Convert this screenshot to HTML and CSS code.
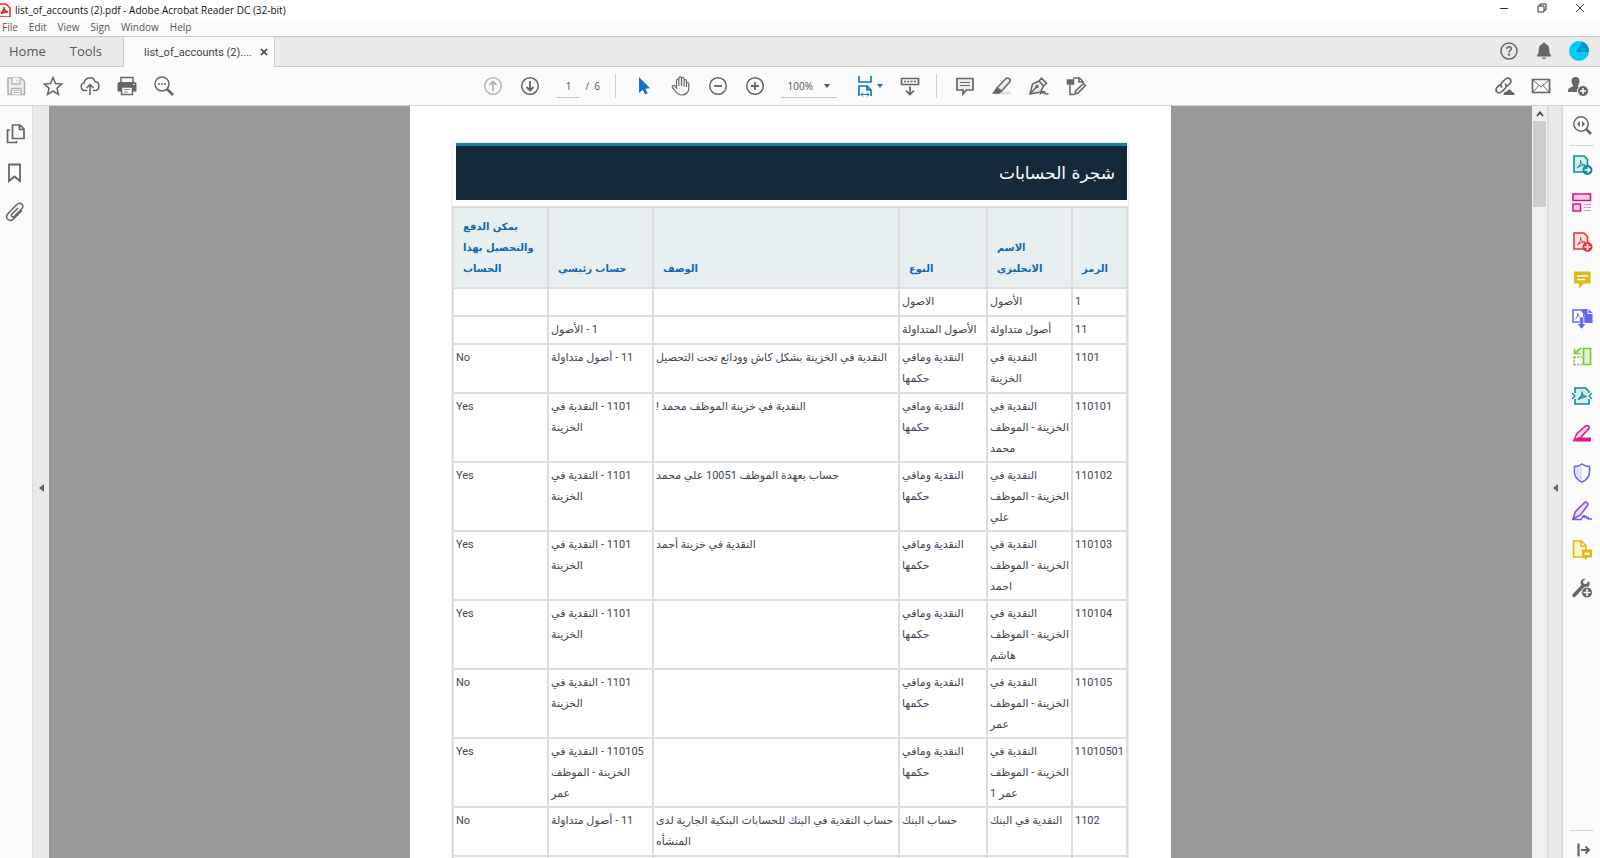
FILE: index.html
```html
<!DOCTYPE html>
<html lang="en">
<head>
<meta charset="utf-8">
<title>list_of_accounts (2).pdf - Adobe Acrobat Reader DC (32-bit)</title>
<link rel="stylesheet" href="styles.css">
</head>
<body>
<header class="titlebar">
  <svg class="app-icon" viewBox="0 0 12 14"><path d="M-3 1h9l4 4v9H-3z" fill="#fff" stroke="#e5252a" stroke-width="1.5"/><path d="M1 10.500C3 9 4 6 4 4c0 3 2 4.500 4 5-3-.5-5 .5-7 1.500z" fill="none" stroke="#e5252a" stroke-width="1.600"/></svg>
  <span class="title-text">list_of_accounts (2).pdf - Adobe Acrobat Reader DC (32-bit)</span>
  <div class="window-controls">
    <button aria-label="Minimize"><svg viewBox="0 0 10 10"><path d="M1 5.500h8"/></svg></button>
    <button aria-label="Restore"><svg viewBox="0 0 10 10"><path d="M1 3h6v6H1zM3 3V1h6v6H7"/></svg></button>
    <button aria-label="Close"><svg viewBox="0 0 10 10"><path d="M1 1l8 8M9 1L1 9"/></svg></button>
  </div>
</header>
<nav class="menubar">
  <button>File</button><button>Edit</button><button>View</button><button>Sign</button><button>Window</button><button>Help</button>
</nav>
<nav class="tabbar">
  <button class="tab home">Home</button>
  <button class="tab tools">Tools</button>
  <div class="tab current"><span>list_of_accounts (2)....</span><button class="tab-close" aria-label="Close tab"><svg viewBox="0 0 8 8"><path d="M1 1l6 6M7 1L1 7" stroke="#444" stroke-width="1.700"/></svg></button></div>
  <div class="account">
    <button aria-label="Help"><svg class="icon" viewBox="0 0 22 22"><circle cx="11" cy="11" r="8" fill="none" stroke="#666" stroke-width="1.500"/><path d="M8.800 9c0-3 4.600-2.800 4.400 0-.1 1.400-2.200 1.700-2.200 3.500" fill="none" stroke="#666" stroke-width="1.600"/><circle cx="11" cy="14.700" r="1.100" fill="#666"/></svg></button>
    <button aria-label="Notifications"><svg class="icon" viewBox="0 0 22 22"><path d="M11 2.500c.9 0 1.500.6 1.500 1.500 3 .8 3.700 3 3.800 6.500.1 2.500.7 3.600 1.700 4.800v1.200H4v-1.200c1-1.200 1.600-2.300 1.700-4.800C5.800 7 6.500 4.800 9.500 4c0-.9.6-1.500 1.500-1.500zM9 17.500h4c-.3 2-3.700 2-4 0z" fill="#666"/></svg></button>
    <button aria-label="Account"><svg class="icon" viewBox="0 0 22 22"><circle cx="11" cy="11" r="10" fill="#00ccfb"/><path d="M8 12L14 1.400a10 10 0 0 1 7 10.600z" fill="#0099cb"/></svg></button>
  </div>
</nav>
<div class="toolbar">
  <div class="group left">
    <button aria-label="Save"><svg class="icon" viewBox="0 0 22 22"><path d="M3 3h13l3.500 3.500v13H3z" fill="#eee" stroke="#b0b0b0" stroke-width="1.500"/><path d="M7 3v6h8V3M6.500 19.500v-6H16v6" fill="#fafafa" stroke="#b0b0b0" stroke-width="1.300"/><path d="M12 4.500v2.500M8.500 15.500h6M8.500 17.500h6" stroke="#bbb"/></svg></button>
    <button aria-label="Star"><svg class="icon line" viewBox="0 0 22 22"><path d="M11 2.500l2.500 6 6.200.500-4.700 4.200 1.500 6.300-5.500-3.400-5.500 3.400L7 13.200 2.300 9l6.200-.5z"/></svg></button>
    <button aria-label="Upload to cloud"><svg class="icon line" viewBox="0 0 22 22"><path d="M8 15.500H5.800a3.900 3.900 0 0 1-.5-7.700c.5-5.900 9-6.800 10.700-1.200 5 .2 5.300 8.400.2 8.900H14M11 20V10M7.500 13L11 9.500l3.500 3.500"/></svg></button>
    <button aria-label="Print"><svg class="icon" viewBox="0 0 22 22"><path d="M5 7V2.500h12V7" fill="#fafafa" stroke="#666" stroke-width="1.500"/><path d="M3 7h16l1.500 1.500v8H17v-3H5v3H1.500v-8z" fill="#666"/><path d="M5.500 12h11v7.500h-11z" fill="#fff" stroke="#666" stroke-width="1.500"/><path d="M8 14.500h6M8 17h4" stroke="#888"/><path d="M17 9.500h1.500" stroke="#fff"/></svg></button>
    <button aria-label="Find"><svg class="icon line" viewBox="0 0 22 22"><circle cx="9" cy="9" r="7"/><path d="M14 14l6 6" stroke-width="2.500"/><path d="M5 9h2M8 9h2M11 9h2"/></svg></button>
  </div>
  <div class="group middle">
    <button aria-label="Previous page"><svg class="icon line pale" viewBox="0 0 22 22"><circle cx="11" cy="11" r="8.300"/><path d="M11 16V6.500M7.500 10L11 6.500l3.500 3.500" stroke-width="1.800"/></svg></button>
    <button aria-label="Next page"><svg class="icon line" viewBox="0 0 22 22"><circle cx="11" cy="11" r="8.300"/><path d="M11 6v9.500M7.500 12l3.500 3.500 3.500-3.500" stroke-width="1.800"/></svg></button>
    <label class="page-nav"><input value="1" aria-label="Page number"><span>/&nbsp; 6</span></label>
    <span class="divider"></span>
    <button aria-label="Select"><svg class="icon" viewBox="0 0 22 22"><path d="M6 2v16l3.700-3.200 2.300 4.700 2.700-1.300-2.300-4.500 4.600-.4z" fill="#1473c8"/></svg></button>
    <button aria-label="Hand"><svg class="icon line thin" viewBox="0 0 22 22"><path d="M6.500 13V5.500c0-2 2.300-2 2.300 0V11 3.500c0-2.200 2.700-2.200 2.700 0V11 4c0-2 2.600-2 2.600 0v7.500V6c0-2 2.400-2 2.400 0v6V9c0-2 2.300-2 2.300 0v4c0 4-3 7-6.800 7-5.500 0-6-4-9.400-7.300-1.200-1.500.6-3.300 2.200-1.800z"/></svg></button>
    <button aria-label="Zoom out"><svg class="icon line" viewBox="0 0 22 22"><circle cx="11" cy="11" r="8.300"/><path d="M7 11h8" stroke-width="1.800"/></svg></button>
    <button aria-label="Zoom in"><svg class="icon line" viewBox="0 0 22 22"><circle cx="11" cy="11" r="8.300"/><path d="M7 11h8M11 7v8" stroke-width="1.800"/></svg></button>
    <div class="zoom"><select aria-label="Zoom level"><option>100%</option></select><svg viewBox="0 0 6 4"><path d="M0 0h6L3 4z" fill="#555"/></svg></div>
    <button class="fit" aria-label="Fit width"><svg class="icon" viewBox="0 0 22 22"><path d="M5 1v6h12V1M5 21V11h8l4 4v6M13 11v4h4" fill="none" stroke="#1473c8" stroke-width="1.700"/><path d="M7 19.500h8M9 17.500l-2 2 2 2M13 17.500l2 2-2 2" fill="none" stroke="#1473c8"/></svg><svg class="caret" viewBox="0 0 6 4"><path d="M0 0h6L3 4z" fill="#1473c8"/></svg></button>
    <button aria-label="Scrolling pages"><svg class="icon line" viewBox="0 0 22 22"><path d="M2.500 3.500h17v6h-17zM11 11.500V19M7 15.500l4 4 4-4" stroke-width="1.700"/><path d="M5 6.500h12" stroke-dasharray="2 1.300"/></svg></button>
    <span class="divider"></span>
    <button aria-label="Comment"><svg class="icon line" viewBox="0 0 22 22"><path d="M3 3.500h16v11.500h-6.500L9 19v-4H3z" fill="#eee" stroke-width="1.700"/><path d="M6 7.500h10M6 10.500h10" stroke-width="1"/></svg></button>
    <button aria-label="Highlight"><svg class="icon line" viewBox="0 0 22 22"><path d="M9 16.500h11v3H4z" fill="#ddd" stroke="none"/><path d="M6 13L14.500 4c2-2.500 6 .3 4.200 3L10.500 16z" fill="#eee"/><path d="M6 13l4.500 3L8 18H2.500z" fill="#666"/></svg></button>
    <button aria-label="Sign"><svg class="icon line" viewBox="0 0 22 22"><path d="M2 19L4.500 9 11 6l4.500 5-3 6zM2 19l6.500-7M11 6l2.500-2.800 5 5L15.500 11" fill="#eee"/><circle cx="9" cy="11.500" r="1"/><path d="M12 19.500c2-4 3-4 2.500-1 2-3 2.500-2 2.500 0l3.500.500"/></svg></button>
    <button aria-label="Edit document"><svg class="icon line" viewBox="0 0 22 22"><path d="M5 10v9.500h4M8 3h6.500L18 6.500V8M14 3v4h4"/><path d="M2.500 5h6v4h-6z" fill="#666"/><path d="M10 19l1-3.500 7.500-7 2 2-7.500 7.500z" fill="#eee"/></svg></button>
  </div>
  <div class="group right">
    <button aria-label="Share link"><svg class="icon line" viewBox="0 0 22 22"><path d="M9 12.500c-3-3 0-5 3-8 3.500-3.500 8 .5 5 4l-3 3M12 8.500c3 3 0 5-2.500 7.500-4 4-8.500 0-5.500-3.500L7 9.500" stroke-width="1.700"/><path d="M10.500 20c0-3 2.500-3.500 3.500-3.500 1-3 4.500-2.500 5 .5 3 0 3 3 2 3z" fill="#666" stroke="none"/></svg></button>
    <button aria-label="Email"><svg class="icon line" viewBox="0 0 22 22"><path d="M2.500 4.500h17v13h-17z" stroke-width="1.700"/><path d="M3 5l8 7 8-7M3 17l6-6.500M19 17l-6-6.500" stroke-width="1"/></svg></button>
    <button aria-label="Add people"><svg class="icon" viewBox="0 0 22 22"><path d="M8.500 2c2.500 0 4 1.500 4 4 0 2-1 3.500-1.500 4.500 0 1.500 1 1.500 3 2.500l-3 4H1c0-3.500 1-4 5-5.500V10C5 8.500 4.500 7.500 4.500 6c0-2.500 1.500-4 4-4z" fill="#666"/><circle cx="16" cy="16" r="5.500" fill="#666" stroke="#fafafa"/><path d="M13 16h6M16 13v6" stroke="#fff" stroke-width="1.500"/></svg></button>
  </div>
</div>
<main class="workspace">
  <aside class="nav-pane">
    <button aria-label="Page thumbnails"><svg class="icon line" viewBox="0 0 22 22"><path d="M8.500 2h7.500l4 4v9.500H8.500zM15.500 2v4.500H20M6 7H3.500v12.500h9V18" stroke-width="1.700"/></svg></button>
    <button aria-label="Bookmarks"><svg class="icon line" viewBox="0 0 22 22"><path d="M5 2.500h11V19l-5.500-4.500L5 19z" stroke-width="1.800"/></svg></button>
    <button aria-label="Attachments"><svg class="icon line" viewBox="0 0 22 22"><path d="M14 7l-6 6c-1.700 1.800.6 4 2.400 2.300l7-7c4-4-1-8-4.700-4.500L4.500 12c-5 5 1 10 5.500 5.500l8-8"/></svg></button>
  </aside>
  <button class="strip strip-left" aria-label="Show navigation pane"><svg viewBox="0 0 5 8"><path d="M5 0v8L0 4z" fill="#666"/></svg></button>
  <section class="viewer">
    <article class="page">
      <div class="report" dir="rtl" lang="ar">
        <h1>شجرة الحسابات</h1>
        <table>
          <colgroup><col class="c-code"><col class="c-name"><col class="c-type"><col class="c-desc"><col class="c-parent"><col class="c-pay"></colgroup>
          <thead><tr><th>الرمز</th><th>الاسم<br>الانجليزي</th><th>النوع</th><th>الوصف</th><th>حساب رئيسي</th><th>يمكن الدفع<br>والتحصيل بهذا<br>الحساب</th></tr></thead>
          <tbody>
            <tr class="one"><td>1</td><td>الأصول</td><td>الاصول</td><td></td><td></td><td></td></tr>
            <tr class="one"><td>11</td><td>أصول متداولة</td><td>الأصول المتداولة</td><td></td><td>1 - الأصول</td><td></td></tr>
            <tr class="two"><td>1101</td><td>النقدية في<br>الخزينة</td><td>النقدية ومافي<br>حكمها</td><td>النقدية في الخزينة بشكل كاش وودائع تحت التحصيل</td><td>11 - أصول متداولة</td><td>No</td></tr>
            <tr><td>110101</td><td>النقدية في<br>الخزينة - الموظف<br>محمد</td><td>النقدية ومافي<br>حكمها</td><td>النقدية في خزينة الموظف محمد !</td><td>1101 - النقدية في<br>الخزينة</td><td>Yes</td></tr>
            <tr><td>110102</td><td>النقدية في<br>الخزينة - الموظف<br>علي</td><td>النقدية ومافي<br>حكمها</td><td>حساب بعهدة الموظف 10051 علي محمد</td><td>1101 - النقدية في<br>الخزينة</td><td>Yes</td></tr>
            <tr><td>110103</td><td>النقدية في<br>الخزينة - الموظف<br>احمد</td><td>النقدية ومافي<br>حكمها</td><td>النقدية في خزينة أحمد</td><td>1101 - النقدية في<br>الخزينة</td><td>Yes</td></tr>
            <tr><td>110104</td><td>النقدية في<br>الخزينة - الموظف<br>هاشم</td><td>النقدية ومافي<br>حكمها</td><td></td><td>1101 - النقدية في<br>الخزينة</td><td>Yes</td></tr>
            <tr><td>110105</td><td>النقدية في<br>الخزينة - الموظف<br>عمر</td><td>النقدية ومافي<br>حكمها</td><td></td><td>1101 - النقدية في<br>الخزينة</td><td>No</td></tr>
            <tr><td>11010501</td><td>النقدية في<br>الخزينة - الموظف<br>عمر 1</td><td>النقدية ومافي<br>حكمها</td><td></td><td>110105 - النقدية في<br>الخزينة - الموظف<br>عمر</td><td>Yes</td></tr>
            <tr class="two"><td>1102</td><td>النقدية في البنك</td><td>حساب البنك</td><td>حساب النقدية في البنك للحسابات البنكية الجارية لدى<br>المنشأه</td><td>11 - أصول متداولة</td><td>No</td></tr>
            <tr class="one"><td></td><td></td><td></td><td></td><td></td><td></td></tr>
          </tbody>
        </table>
      </div>
    </article>
  </section>
  <div class="scrollbar"><button aria-label="Scroll up"><svg viewBox="0 0 8 6"><path d="M1 5l3-3.500L7 5" fill="none" stroke="#444" stroke-width="1.800"/></svg></button><div class="thumb"></div></div>
  <button class="strip strip-right" aria-label="Hide tools pane"><svg viewBox="0 0 5 8"><path d="M5 0v8L0 4z" fill="#666"/></svg></button>
  <aside class="tools-pane">
    <button aria-label="Search tools"><svg class="icon line" viewBox="0 0 22 22"><circle cx="10" cy="10" r="7.200"/><path d="M15 15l5 5" stroke-width="2.500"/><path d="M9 7v6l-3-3zM11 7v6l3-3z" fill="#666" stroke="none"/></svg></button>
    <span class="rule"></span>
    <div class="tool-list">
      <button aria-label="Export PDF"><svg class="icon" viewBox="0 0 22 22"><path d="M3 2h10l3.500 3.500V18H3z" fill="#d4ecee" stroke="#0d8f98" stroke-width="1.600"/><path d="M6 14c3-2 4-5 3.500-8 0 3 2 5 4.500 5-3 0-5 1-8 3z" fill="none" stroke="#0d8f98"/><circle cx="16.500" cy="16" r="5" fill="#0d8f98"/><path d="M13.500 16h5M16.500 13.500L19 16l-2.500 2.500" fill="none" stroke="#fff" stroke-width="1.500"/></svg></button>
      <button aria-label="Edit PDF"><svg class="icon" viewBox="0 0 22 22"><path d="M2 2h17.500v6.500H2zM2 12h7.500v7H2z" fill="#f5cfe4" stroke="#d8128a" stroke-width="1.600"/><path d="M13 12.500h7M13 15.500h7M13 18.500h7" stroke="#e88ac3"/></svg></button>
      <button aria-label="Create PDF"><svg class="icon" viewBox="0 0 22 22"><path d="M3 2h10l3.500 3.500V18H3z" fill="#fde5e5" stroke="#e8343a" stroke-width="1.600"/><path d="M6 14c3-2 4-5 3.500-8 0 3 2 5 4.500 5-3 0-5 1-8 3z" fill="none" stroke="#e8343a"/><circle cx="16.500" cy="16" r="5" fill="#e8343a"/><path d="M13.500 16h6M16.500 13v6" stroke="#fff" stroke-width="1.600"/></svg></button>
      <button aria-label="Comment tool"><svg class="icon" viewBox="0 0 22 22"><path d="M3 2.500h16.500v12H13l-5 5v-5H3z" fill="#dfb916"/><path d="M6 7h11M6 10.500h8" stroke="#fff" stroke-width="1.500"/></svg></button>
      <button aria-label="Combine files"><svg class="icon" viewBox="0 0 22 22"><path d="M11 1h6.500L21.500 5v10H14V6h-3z" fill="#6464ec"/><path d="M17 1v4.500h4.500" stroke="#fff" fill="none"/><path d="M2 2h8l3 3v9H2z" fill="#fff" stroke="#6464ec" stroke-width="1.500"/><path d="M4 11.500c2-1.500 3-4 2.700-6 0 2.500 1.500 3.500 3.500 4" fill="none" stroke="#6464ec"/><path d="M8.700 9h3.500v7H15l-4.500 5L6 16h2.700z" fill="#6464ec" stroke="#fff" stroke-width=".6"/></svg></button>
      <button aria-label="Organize pages"><svg class="icon" viewBox="0 0 22 22"><path d="M12.500 2.500h7v16h-7z" fill="#e6f7d9" stroke="#77cc2c" stroke-width="1.700"/><path d="M3 11h8M3 18.500h8M3 11v8" fill="none" stroke="#77cc2c" stroke-width="1.600" stroke-dasharray="2 1.300"/><path d="M10 2L4 7M3.500 2.500v5h6" fill="none" stroke="#77cc2c" stroke-width="1.700"/></svg></button>
      <button aria-label="Compress PDF"><svg class="icon" viewBox="0 0 22 22"><path d="M4 8V3h10.500L18 6.500V8M4 14v5h14v-5" fill="#d4ecee" stroke="#0d8f98" stroke-width="1.600"/><path d="M5 7h12v8H5z" fill="#d4ecee"/><path d="M7 14.500c3-2 4.500-5 4-8 0 4 2 5 4.500 5-3 0-5 1-8.500 3zM1 8l3 3-3 3M21 8l-3 3 3 3" fill="none" stroke="#0d8f98" stroke-width="1.400"/></svg></button>
      <button aria-label="Redact"><svg class="icon" viewBox="0 0 22 22"><path d="M10 14.500h10v4H2z" fill="#e0188c"/><path d="M3 17L6 10.500l8.500-7.500c2-1.500 5 1 3 3L9.500 14.500z" fill="#fbd5eb" stroke="#e0188c" stroke-width="1.600"/></svg></button>
      <button aria-label="Protect"><svg class="icon" viewBox="0 0 22 22"><path d="M11 2c2.500 2 5 2.500 7.500 2.500V10c0 5-3 8-7.500 10-4.500-2-7.500-5-7.500-10V4.500C6 4.500 8.500 4 11 2z" fill="#fff" stroke="#6464ec" stroke-width="1.600"/><path d="M11 3.500v15C7 16.500 4.500 14 4.500 10V5.500C7 5.300 9 4.800 11 3.500z" fill="#dedefa"/></svg></button>
      <button aria-label="Fill and sign"><svg class="icon" viewBox="0 0 22 22"><path d="M2 19l2.500-7.500L13 3c2-2 5 0 3.500 2.500L9.500 15z" fill="#eadffb" stroke="#8a4fdc" stroke-width="1.600"/><path d="M2 19.500h8c2-4 4-6 3-1.500 2-3 3-2 2.500.5 1-1.500 2-1.500 2 .500h3.500" fill="none" stroke="#8a4fdc" stroke-width="1.500"/></svg></button>
      <button aria-label="Send for comments"><svg class="icon" viewBox="0 0 22 22"><path d="M2.500 2h8l4.500 4.500V18H2.500zM10 2v5h5" fill="#fbf1c8" stroke="#dfb916" stroke-width="1.600"/><path d="M11 10.500h10v8h-4l-3 2.500v-2.500h-3z" fill="#dfb916"/><path d="M13.500 13.500h5v2.500h-5z" fill="#fff3b8"/></svg></button>
      <button aria-label="More tools"><svg class="icon" viewBox="0 0 22 22"><path d="M3 18.500L12 9" stroke="#666" stroke-width="3.500" stroke-linecap="round"/><path d="M18 4l-3 3-2.500-.5L12 4l3-2.500c-4-.5-6.500 3-5 6l4 3.500c4 0 5.500-3.500 4-7z" fill="#666"/><circle cx="16" cy="15.500" r="5.500" fill="#666" stroke="#fafafa"/><path d="M12.500 15.500h7M16 12v7" stroke="#fff" stroke-width="1.500"/></svg></button>
    </div>
    <div class="pane-foot"><span class="rule"></span><button aria-label="Collapse pane"><svg class="icon line" viewBox="0 0 22 22"><path d="M8.500 4.500v13" stroke-width="2.200"/><path d="M11 11h8M15.500 7.500L19 11l-3.500 3.500" stroke-width="1.900"/></svg></button></div>
  </aside>
</main>
</body>
</html>
```
FILE: styles.css
```css
* { box-sizing: border-box; }
body {
  margin: 0;
  height: 100vh;
  display: flex;
  flex-direction: column;
  overflow: hidden;
  background: #fbfbfb;
  color: #555;
  font-family: "Open Sans", "Noto Sans", sans-serif;
  font-size: 11px;
}
button {
  padding: 0;
  border: 0;
  background: none;
  color: inherit;
  font: inherit;
  display: flex;
  align-items: center;
  justify-content: center;
}
svg { display: block; flex: none; }
.icon { width: 22px; height: 22px; }
.line { fill: none; stroke: #666; stroke-width: 1.5; }
.thin { stroke-width: 1.2; }
.pale { stroke: #b5b5b5; }

.titlebar { flex: none; display: flex; align-items: center; height: 19px; background: #fff; color: #111; }
.title-text { font-size: 10px; }
.app-icon { width: 12px; height: 14px; margin-right: 3px; }
.window-controls { margin-left: auto; display: flex; gap: 28px; padding-right: 15px; }
.window-controls button { height: 17px; align-items: flex-start; padding-top: 2px; }
.window-controls svg { width: 10px; height: 10px; fill: none; stroke: #333; }

.menubar { flex: none; display: flex; align-items: center; gap: 11px; height: 17px; padding: 0 0 2px 2px; font-size: 10px; }

.tabbar { flex: none; display: flex; height: 31px; background: #eaeaea; border: 1px solid #cbcbcb; border-width: 1px 0; font-size: 13px; }
.tab { padding-bottom: 2px; }
.home { padding-left: 9px; }
.tools { padding-left: 24px; padding-right: 21px; }
.current { display: flex; align-items: center; gap: 8px; margin-bottom: -1px; padding: 0 6px 0 20px; background: #fbfbfb; border: 1px solid #cbcbcb; border-width: 0 1px; font-family: Roboto, sans-serif; font-size: 11px; color: #444; }
.tab-close svg { width: 8px; height: 8px; }
.account { margin-left: auto; display: flex; gap: 13px; padding: 0 10px 2px 0; }

.toolbar { flex: none; display: grid; grid-template-columns: 482fr auto 512fr; align-items: center; height: 39px; border-bottom: 1px solid #d5d5d5; }
.group { display: flex; align-items: center; gap: 15px; }
.left { padding-left: 5px; }
.right { justify-content: flex-end; padding-right: 11px; }
.page-nav { display: flex; align-items: center; gap: 5px; width: 44px; white-space: nowrap; font-size: 10px; }
.page-nav input { width: 24px; height: 24px; padding: 0; border: 0; border-bottom: 1px solid #c5c5c5; background: none; color: inherit; font: inherit; text-align: center; }
.divider { width: 1px; height: 24px; background: #d0d0d0; margin-right: 2px; }
.zoom { display: flex; align-items: center; width: 56px; height: 24px; border-bottom: 1px solid #c5c5c5; font-size: 10px; }
.zoom select { flex: 1; appearance: none; border: 0; padding: 0 0 0 6px; background: none; color: inherit; font: inherit; }
.zoom svg, .caret { width: 6px; height: 4px; }
.zoom svg { margin-right: 7px; }
.fit { width: 32px; gap: 1px; }

.workspace { flex: 1; min-height: 0; display: flex; }
.nav-pane { width: 33px; padding: 17px 0 0 4px; display: flex; flex-direction: column; gap: 17px; border-right: 1px solid #ddd; }
.nav-pane button { width: 22px; }
.strip { width: 15px; padding-top: 12px; background: #eaeaea; }
.strip svg { width: 5px; height: 8px; }
.strip-left { width: 16px; }
.strip-right { width: 16px; border: 2px solid #dcdcdc; border-width: 0 2px; }
.viewer { flex: 1; min-width: 0; overflow: hidden; background: #999; display: flex; justify-content: center; }
.scrollbar { width: 15px; background: #f0f0f0; padding: 0 1px; }
.scrollbar button { width: 100%; height: 15px; }
.scrollbar svg { width: 8px; height: 6px; }
.thumb { height: 86px; background: #cdcdcd; }
.tools-pane { width: 37px; display: flex; flex-direction: column; align-items: center; padding-top: 8px; }
.rule { display: block; width: 24px; height: 1px; background: #d5d5d5; }
.tools-pane > .rule { margin: 9px 0 8px; }
.tool-list { height: 445px; display: flex; flex-direction: column; justify-content: space-between; }
.pane-foot { margin-top: auto; height: 28px; }
.pane-foot button { margin-top: 8px; }

.page { width: 761px; padding: 37px 43px 0 42px; background: #fff; }
.report { box-shadow: 0 0 1px #999; color: #404656; font-family: "DejaVu Sans", sans-serif; }
.report h1 { margin: 0 1px 6px 4px; padding: 0 12px; height: 57px; line-height: 54px; border-top: 3px solid #1c7fa6; background: #15293c; color: #fff; font-size: 17px; font-weight: 400; }
.report table { width: 100%; table-layout: fixed; border-collapse: collapse; }
.report th, .report td { border: 2px solid #ddd; text-align: left; white-space: nowrap; line-height: 21px; }
.report td { vertical-align: top; padding: 2px; font-family: Roboto, "DejaVu Sans", sans-serif; font-size: 11px; }
.report th { height: 81px; vertical-align: bottom; padding: 8px 9px; background: #e8eff1; color: #1266b0; font-size: 10px; font-weight: 700; }
.report .one { height: 28px; }
.report .two { height: 49px; }
.c-code { width: 55px; }
.c-name { width: 85px; }
.c-type { width: 88px; }
.c-parent { width: 105px; }
.c-pay { width: 95px; }
```
